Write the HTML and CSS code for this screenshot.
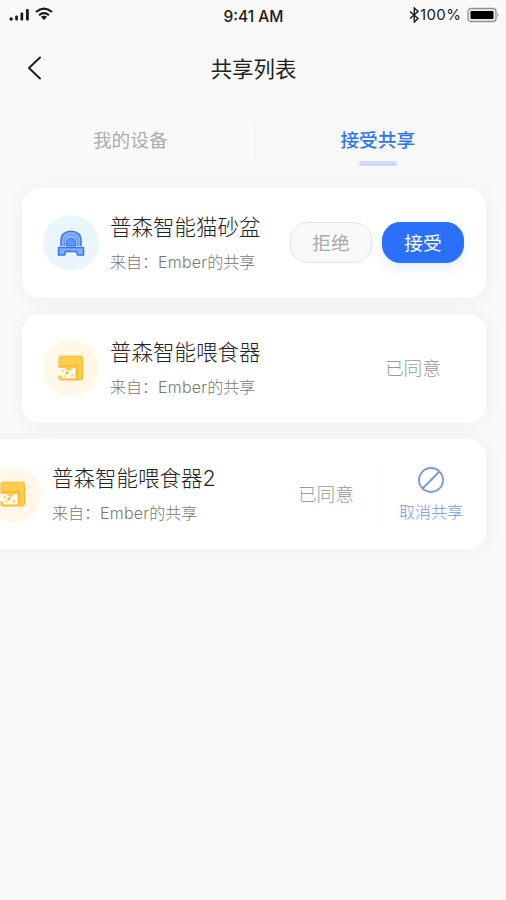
FILE: index.html
```html
<!DOCTYPE html>
<html lang="zh-CN">
<head>
<meta charset="utf-8">
<meta name="viewport" content="width=device-width, initial-scale=1">
<title>共享列表</title>
<link rel="stylesheet" href="styles.css">
</head>
<body>
<svg class="defs" width="0" height="0" aria-hidden="true">
  <symbol id="feeder" viewBox="0 0 28 28">
    <path d="M4 2.200H23.500a2 2 0 0 1 2 2V24a2 2 0 0 1-2 2H4a2 2 0 0 1-2-2V4.200a2 2 0 0 1 2-2Z" fill="#ffcd4d" stroke="#fdb827"/>
    <path d="M3 12.200H20V25" fill="none" stroke="#f9b02b" stroke-width="1.300"/>
    <path d="M1 14h7l2 2.500 3 .5 2.500-3H18.500v10.300H5V22L1 21Z" fill="#fffaf0"/>
    <circle cx="10" cy="18.800" r="1.600" fill="#fdb827"/>
    <circle cx="6" cy="17" r="1" fill="#fdc95a"/>
    <circle cx="15" cy="21.500" r="1.200" fill="#fdc95a"/>
    <circle cx="7.500" cy="22" r="1" fill="#fdc95a"/>
  </symbol>
</svg>
<div class="screen">
  <div class="status">
    <div class="status-left">
      <svg width="20" height="14" viewBox="0 0 20 14" fill="#191919"><circle cx="2.200" cy="12" r="1.700"/><rect x="6.200" y="8.500" width="2.700" height="5" rx="1"/><rect x="11.500" y="5.500" width="2.700" height="8" rx="1"/><rect x="17" y="2" width="2.800" height="11.500" rx="1"/></svg>
      <svg class="wifi" width="18" height="14" viewBox="0 0 18 14" fill="none" stroke="#191919"><path d="M1 5Q9-1.800 17 5" stroke-width="2.200"/><path d="M4 8.300Q9 4 14 8.300" stroke-width="2"/><path d="M5.800 9.700Q9 7.700 12.200 9.700L9 13Z" fill="#191919" stroke="none"/></svg>
    </div>
    <span class="clock">9:41 AM</span>
    <div class="status-right">
      <svg width="11" height="16" viewBox="0 0 11 16" fill="none" stroke="#191919" stroke-width="1.400"><path d="m1 4.500 8 7L5.300 15V1L9 4.500l-8 7"/></svg>
      <span>100%</span>
      <svg class="battery" width="34" height="16" viewBox="0 0 34 16"><rect x="1" y="1.500" width="28" height="13" rx="3" fill="#eee" stroke="#929292" stroke-width="1.300"/><rect x="3.500" y="4" width="23" height="8" rx="1" fill="#000"/><path d="M30.500 5.500q2.500 2.500 0 5Z" fill="#aaa"/></svg>
    </div>
  </div>
  <header class="nav">
    <svg class="back" width="16" height="26" viewBox="0 0 16 26" fill="none" stroke="#202020" stroke-width="2" stroke-linecap="round" stroke-linejoin="round"><path d="M14 2.500 3 13l11 10.500"/></svg>
    <h1>共享列表</h1>
  </header>
  <nav class="tabs">
    <div class="tab">我的设备</div>
    <div class="tab active">接受共享</div>
  </nav>
  <main class="list">
    <article class="card">
      <div class="avatar blue">
        <svg width="28" height="28" viewBox="0 0 28 28"><path d="M4 17V11.500C4 5.500 8 2.200 14 2.200s10 3.300 10 9.300V17" fill="#83adfa" stroke="#3975ec" stroke-width="1.500"/><path d="M7.500 17v-4.500a6.500 6.500 0 0 1 13 0V17" fill="#9dbdfb" stroke="#5c8ff2"/><path d="M9.500 17v-3.500a4.500 4.500 0 0 1 9 0V17Z" fill="#5f92f5" stroke="#3975ec"/><path d="M1.500 18.500h25V26h-6l-1-3.500h-11l-1 3.500h-6Z" fill="#83adfa" stroke="#3975ec" stroke-width="1.500" stroke-linejoin="round"/></svg>
      </div>
      <div class="info"><h2>普森智能猫砂盆</h2><p>来自：<span class="latin">Ember</span>的共享</p></div>
      <div class="actions"><button class="btn">拒绝</button><button class="btn primary">接受</button></div>
    </article>
    <article class="card">
      <div class="avatar yellow"><svg width="28" height="28"><use href="#feeder"/></svg></div>
      <div class="info"><h2>普森智能喂食器</h2><p>来自：<span class="latin">Ember</span>的共享</p></div>
      <span class="state">已同意</span>
    </article>
    <article class="card swiped">
      <div class="avatar yellow"><svg width="28" height="28"><use href="#feeder"/></svg></div>
      <div class="info"><h2>普森智能喂食器<span class="digit">2</span></h2><p>来自：<span class="latin">Ember</span>的共享</p></div>
      <span class="state">已同意</span>
      <div class="cancel">
        <svg width="28" height="28" viewBox="0 0 28 28" fill="none" stroke="#7596db" stroke-width="1.800"><circle cx="14" cy="14" r="12"/><path d="M5.500 22.500l17-17"/></svg>
        <span>取消共享</span>
      </div>
    </article>
  </main>
</div>
</body>
</html>
```
FILE: styles.css
```css
* { box-sizing: border-box; }
body {
  margin: 0;
  background: #f9f9f9;
  color: #222;
  font-family: "Liberation Sans", "Noto Sans CJK SC", sans-serif;
}
h1, h2, p { margin: 0; font-weight: 400; }
.defs { display: block; height: 0; }
.screen { width: 506px; height: 900px; overflow: hidden; }

.status {
  display: grid;
  grid-template-columns: 1fr auto 1fr;
  align-items: center;
  height: 32px;
  padding: 0 5px 0 9px;
  font-family: Inter, "Liberation Sans", sans-serif;
  font-size: 15px;
  color: #191919;
}
.status-left, .status-right { display: flex; align-items: center; }
.status-left { padding-bottom: 4px; }
.status-right { justify-content: flex-end; padding-bottom: 3px; }
.status-right span { width: 43px; letter-spacing: .4px; white-space: nowrap; }
.wifi { margin-left: 6px; }
.battery { margin-left: 4px; }
.clock { padding-right: 3px; font-size: 15.500px; font-weight: 450; }

.nav {
  display: grid;
  grid-template-columns: 1fr auto 1fr;
  align-items: center;
  height: 72px;
  padding: 0 25px 0 26px;
}
.nav h1 { padding-top: 3px; font-size: 21.400px; line-height: 32px; }

.tabs { display: flex; height: 84px; padding: 20px 5px 0 7px; }
.tab {
  display: flex;
  flex: 1;
  flex-direction: column;
  align-items: center;
  height: 36px;
  font-size: 18.700px;
  line-height: 34px;
  color: #adadad;
}
.tab:first-child { border-right: 1px solid #eee; }
.tab.active { color: #2f73fa; font-weight: 500; }
.tab.active::after {
  content: "";
  flex: none;
  width: 38px;
  height: 5px;
  margin-top: 3px;
  border-radius: 3px;
  background: #cedafa;
}

.list { display: grid; gap: 16px; padding: 0 20px 0 22px; }
.card {
  display: flex;
  align-items: center;
  height: 109.500px;
  padding: 0 22px 0 21px;
  border-radius: 18px;
  background: #fff;
  box-shadow: 0 1px 16px rgba(76, 106, 126, .07);
}
.avatar {
  display: flex;
  flex: none;
  align-items: center;
  justify-content: center;
  width: 56px;
  height: 56px;
  border-radius: 50%;
}
.blue { background: #eaf6ff; }
.yellow { background: #fff8e8; }
.info { flex: 1; padding: 2px 0 0 11px; white-space: nowrap; }
.info h2 { font-size: 21.500px; line-height: 32px; font-weight: 300; }
.info p { margin-top: 5px; font-size: 16px; line-height: 26px; font-weight: 300; color: #777; }
.latin { font-family: Inter, "Liberation Sans", sans-serif; letter-spacing: .2px; }
.digit { font-family: Inter, "Liberation Sans", sans-serif; }
.actions { display: flex; gap: 10px; }
.btn {
  width: 82px;
  height: 41px;
  padding: 2px 0 0;
  border: 1px solid #e3e3e3;
  border-radius: 18px;
  background: #f9f9f9;
  color: #aaa;
  font: 400 18.700px/36px "Liberation Sans", "Noto Sans CJK SC", sans-serif;
}
.btn.primary {
  border-color: #2f73fa;
  background: #2b70fc;
  color: #fff;
  box-shadow: 0 6px 14px rgba(47, 115, 250, .12);
}
.state { padding: 0 23px 3px 0; font-size: 18.700px; font-weight: 300; color: #999; }
.swiped { margin-left: -58px; }
.cancel {
  display: flex;
  flex-direction: column;
  align-items: center;
  gap: 6px;
  margin-right: 1px;
  padding: 4px 0 0 22px;
  border-left: 1px solid #fafafa;
  color: #7596db;
  font-size: 16px;
  line-height: 26px;
  font-weight: 300;
}
.swiped .state { padding-right: 22px; }
```
